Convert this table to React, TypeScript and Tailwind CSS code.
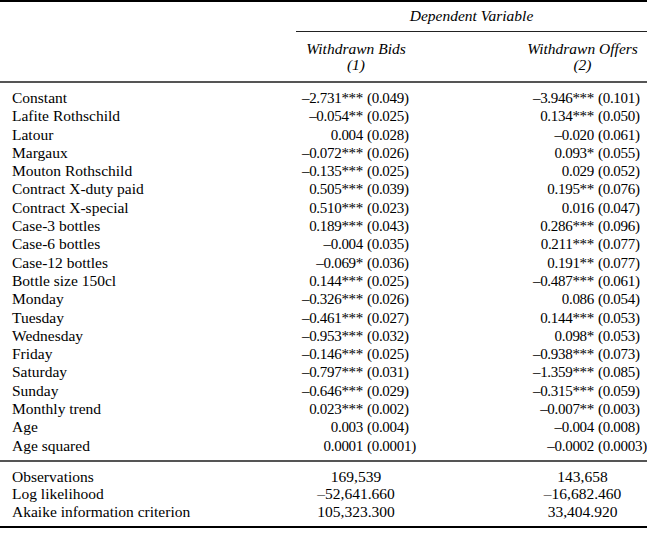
const rows: [string, string, string, string, string][] = [
  ['Constant', '–2.731***', '(0.049)', '–3.946***', '(0.101)'],
  ['Lafite Rothschild', '–0.054**', '(0.025)', '0.134***', '(0.050)'],
  ['Latour', '0.004', '(0.028)', '–0.020', '(0.061)'],
  ['Margaux', '–0.072***', '(0.026)', '0.093*', '(0.055)'],
  ['Mouton Rothschild', '–0.135***', '(0.025)', '0.029', '(0.052)'],
  ['Contract X-duty paid', '0.505***', '(0.039)', '0.195**', '(0.076)'],
  ['Contract X-special', '0.510***', '(0.023)', '0.016', '(0.047)'],
  ['Case-3 bottles', '0.189***', '(0.043)', '0.286***', '(0.096)'],
  ['Case-6 bottles', '–0.004', '(0.035)', '0.211***', '(0.077)'],
  ['Case-12 bottles', '–0.069*', '(0.036)', '0.191**', '(0.077)'],
  ['Bottle size 150cl', '0.144***', '(0.025)', '–0.487***', '(0.061)'],
  ['Monday', '–0.326***', '(0.026)', '0.086', '(0.054)'],
  ['Tuesday', '–0.461***', '(0.027)', '0.144***', '(0.053)'],
  ['Wednesday', '–0.953***', '(0.032)', '0.098*', '(0.053)'],
  ['Friday', '–0.146***', '(0.025)', '–0.938***', '(0.073)'],
  ['Saturday', '–0.797***', '(0.031)', '–1.359***', '(0.085)'],
  ['Sunday', '–0.646***', '(0.029)', '–0.315***', '(0.059)'],
  ['Monthly trend', '0.023***', '(0.002)', '–0.007**', '(0.003)'],
  ['Age', '0.003', '(0.004)', '–0.004', '(0.008)'],
  ['Age squared', '0.0001', '(0.0001)', '–0.0002', '(0.0003)'],
]

const stats: [string, string, string][] = [
  ['Observations', '169,539', '143,658'],
  ['Log likelihood', '–52,641.660', '–16,682.460'],
  ['Akaike information criterion', '105,323.300', '33,404.920'],
]

export default function App() {
  return (
    <div
      className="w-[647px] h-[534px] bg-white text-black text-[15.5px] overflow-hidden"
      style={{ fontFamily: '"Liberation Serif", "Times New Roman", serif' }}
    >
      {/* header */}
      <div className="border-t-2 border-black">
        <div className="ml-[296px] pt-[5px] pb-[6px] text-center italic leading-[18px] border-b-[1.5px] border-[#222]">
          Dependent Variable
        </div>
        <div className="flex italic leading-[16px] pt-[9px] pb-[8px] border-b-2 border-[#555]">
          <div className="w-[236px]" />
          <div className="w-[240px] text-center">
            <div>Withdrawn Bids</div>
            <div>(1)</div>
          </div>
          <div className="w-[42px]" />
          <div className="w-[129px] text-center">
            <div>Withdrawn Offers</div>
            <div>(2)</div>
          </div>
        </div>
      </div>

      {/* coefficients */}
      <div className="pt-[6px] pb-[5px] leading-[18.3px] border-b-2 border-[#555]">
        {rows.map(([label, c1, s1, c2, s2]) => (
          <div key={label} className="flex whitespace-nowrap">
            <div className="w-[278px] pl-[12px]">{label}</div>
            <div className="w-[85px] text-right text-[15px] tracking-[-0.3px]">{c1}</div>
            <div className="w-[155px] pl-[4px] text-[15px] tracking-[-0.3px]">{s1}</div>
            <div className="w-[76px] text-right text-[15px] tracking-[-0.3px]">{c2}</div>
            <div className="pl-[4px] text-[15px] tracking-[-0.3px]">{s2}</div>
          </div>
        ))}
      </div>

      {/* fit statistics */}
      <div className="pt-[6px] pb-[6px] leading-[17.5px] border-b-2 border-black">
        {stats.map(([label, a, b]) => (
          <div key={label} className="flex whitespace-nowrap">
            <div className="w-[236px] pl-[12px]">{label}</div>
            <div className="w-[240px] text-center">{a}</div>
            <div className="w-[42px]" />
            <div className="w-[129px] text-center">{b}</div>
          </div>
        ))}
      </div>
    </div>
  )
}
